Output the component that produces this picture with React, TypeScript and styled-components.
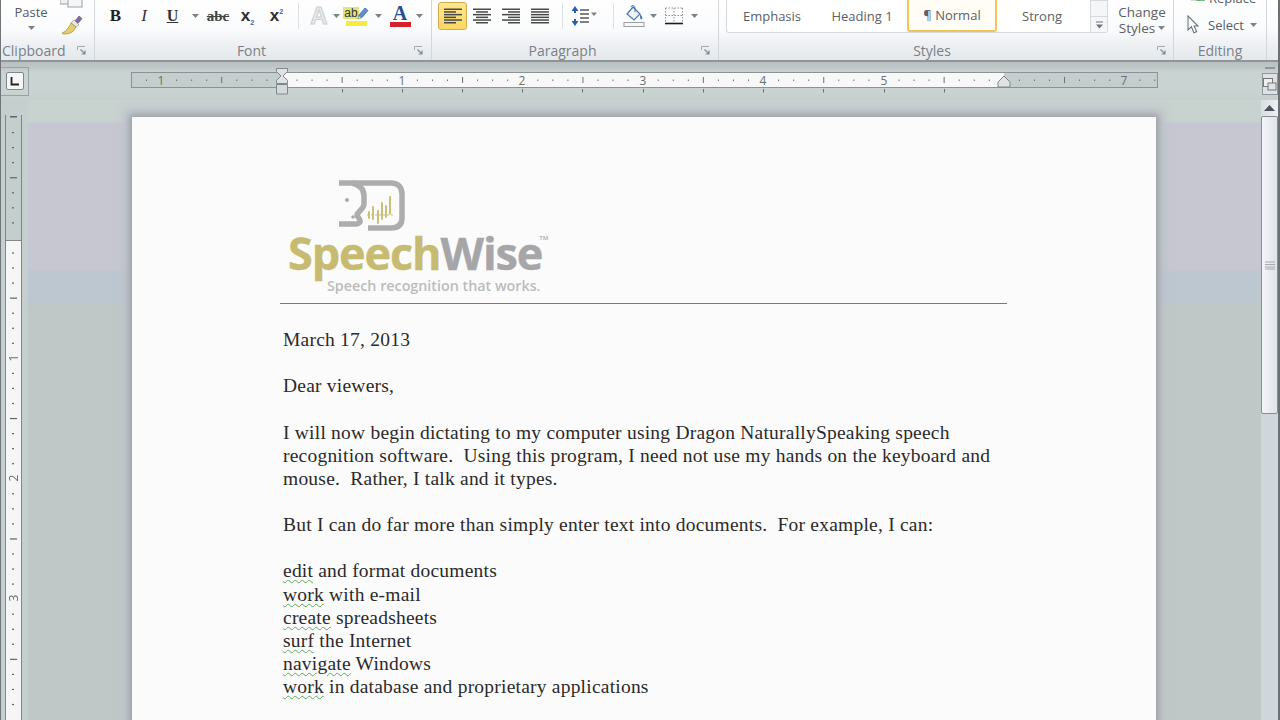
import styled, { createGlobalStyle } from "styled-components";

const GlobalStyle = createGlobalStyle`
  html, body {
    margin: 0;
    padding: 0;
    width: 1280px;
    height: 720px;
    overflow: hidden;
    background: #c4cdcb;
  }
`;

const rulerDots = () => {
  const out: number[] = [];
  for (let x = 11; x < 1020; x += 15.05) out.push(x);
  return out;
};

function Caret() {
  return (
    <CaretBox>
      <svg width="7" height="4" viewBox="0 0 7 4">
        <path d="M0 0h7L3.5 4z" fill="#7c8288" />
      </svg>
    </CaretBox>
  );
}

function Launcher() {
  return (
    <svg width="9" height="9" viewBox="0 0 9 9">
      <path d="M.5 4V.5H8" fill="none" stroke="#a4a9ae" />
      <path d="M3.5 3.5L8 8M8 4.5V8H4.5" fill="none" stroke="#7d8c9c" strokeWidth="1.2" />
    </svg>
  );
}

function AlignIcon({ kind }: { kind: "left" | "center" | "right" | "full" }) {
  const rows = [18, 12, 18, 12, 18, 12];
  return (
    <svg width="18" height="16" viewBox="0 0 18 16">
      {rows.map((w, i) => {
        const width = kind === "full" ? 18 : w;
        const x = kind === "left" || kind === "full" ? 0 : kind === "center" ? (18 - width) / 2 : 18 - width;
        return <rect key={i} x={x} y={i * 2.7 + 0.5} width={width} height="1.5" fill="#4a4a48" />;
      })}
    </svg>
  );
}

function LineSpacingIcon() {
  return (
    <svg width="26" height="20" viewBox="0 0 26 20">
      <path d="M4 0l3.5 5H5v2H3V5H.5z" fill="#2a5fb0" />
      <path d="M4 20l3.5-5H5v-2H3v2H.5z" fill="#2a5fb0" />
      <path d="M9 4h9M9 8h9M9 12h9M9 16h9" stroke="#55585c" strokeWidth="1.5" />
      <path d="M20 6.5h6L23 10z" fill="#7c8288" />
    </svg>
  );
}

function ShadingIcon() {
  return (
    <svg width="22" height="22" viewBox="0 0 22 22">
      <path d="M4 9l6-7 7 7-6 6z" fill="#eef3f8" stroke="#4a78aa" strokeWidth="1.2" />
      <path d="M8 2c0-2 4-2 4 1v4" fill="none" stroke="#4a78aa" />
      <path d="M17 9c2 2 3 4 2 5s-2 0-2-2z" fill="#3f7fc0" />
      <rect x="1" y="17.5" width="20" height="4" fill="#f6f6f4" stroke="#9a9fa3" />
    </svg>
  );
}

function BorderIcon() {
  return (
    <svg width="18" height="18" viewBox="0 0 18 18">
      <path d="M.5 1h17M.5 1v15M17.5 1v15M9 1v15M.5 8.5h17" stroke="#8f9499" strokeDasharray="1.5 1.5" fill="none" />
      <path d="M0 16.5h18" stroke="#1c1c1c" strokeWidth="1.6" />
    </svg>
  );
}

function BrushIcon() {
  return (
    <svg width="22" height="20" viewBox="0 0 22 20">
      <path d="M14 6l4-5 3 2.5-4 5z" fill="#7c6f9c" stroke="#5d5480" strokeWidth=".6" />
      <path d="M13 5l5 5-3 2-5-4z" fill="#e9e9ee" stroke="#8a8a90" strokeWidth=".6" />
      <path d="M10 8l5 4c-2 5-6 7-12 7-1 0-2-.6-2-1 3-1 7-5 9-10z" fill="#e6cf6a" stroke="#9c8a3a" strokeWidth=".7" />
    </svg>
  );
}

function CopyIcon() {
  return (
    <svg width="24" height="8" viewBox="0 0 24 8">
      <rect x="0" y="-6" width="14" height="10" fill="#eef0f3" stroke="#9aa1a8" />
      <rect x="8" y="-6" width="14" height="13" fill="#f6f6f6" stroke="#9aa1a8" />
    </svg>
  );
}

function PenIcon() {
  return (
    <svg width="12" height="14" viewBox="0 0 12 14">
      <path d="M1 12l1-4 6-7 3 2.500-6 7z" fill="#5f8fd0" stroke="#35609a" strokeWidth=".7" />
      <path d="M1 12l1-3 2 2z" fill="#f4ee3a" />
    </svg>
  );
}

function CursorIcon() {
  return (
    <svg width="16" height="20" viewBox="0 0 16 20">
      <path d="M2 1v14l3.400-3.200 2.500 6 2.700-1.100-2.500-5.700H12z" fill="#fff" stroke="#6a7480" strokeWidth="1.100" />
    </svg>
  );
}

function ReplaceIcon() {
  return (
    <svg width="19" height="8" viewBox="0 0 19 8">
      <path d="M1 0v5h4" fill="none" stroke="#6e7378" />
      <rect x="5" y="1" width="5" height="5" fill="#e4e7ea" stroke="#7d8288" strokeWidth=".6" />
      <path d="M11 6c0-4 4-4 4-1v1h-4zM16 3h2v3h-2" fill="none" stroke="#2f9c3a" strokeWidth="1.3" />
    </svg>
  );
}

function Ruler() {
  const numbers: [number, string][] = [
    [30, "1"],
    [271, "1"],
    [391, "2"],
    [512, "3"],
    [632, "4"],
    [753, "5"],
    [993, "7"],
  ];
  const skip = numbers.map(([x]) => x);
  return (
    <svg width="1028" height="30" viewBox="0 0 1028 30">
      <rect x="0.5" y="6.5" width="1026" height="15" fill="#c4cecc" stroke="#8a9296" />
      <rect x="151" y="7" width="722" height="14" fill="#f7f8f7" />
      {rulerDots().map((x, i) => {
        const half = i % 4 === 1;
        if (skip.some((n) => Math.abs(n - x - 4) < 6)) return null;
        return <rect key={i} x={x + 4} y={half ? 11 : 13.5} width="1" height={half ? 6 : 1.5} fill="#6a7074" />;
      })}
      {numbers.map(([x, label]) => (
        <RulerNumber key={x + label} x={x} y="18.5" textAnchor="middle">
          {label}
        </RulerNumber>
      ))}
      {[211, 271, 331, 391, 451, 512, 572, 632, 692, 753, 813].map((x) => (
        <rect key={x} x={x} y="23" width="1" height="3.5" fill="#6a7074" />
      ))}
      <path d="M145.500 2.500h11v3l-4.500 4.500 4.500 4.500v3h-11v-3l4.500-4.500-4.500-4.500z" fill="#dfe3e4" stroke="#80878c" />
      <path d="M145.500 18.500h11v9.500h-11z" fill="#d4d9da" stroke="#80878c" />
      <path d="M867 21v-5l6-6 6 6v5z" fill="#dfe3e4" stroke="#80878c" />
    </svg>
  );
}

function VerticalRuler() {
  const ticks: number[] = [];
  for (let y = 17; y < 620; y += 15.05) ticks.push(y);
  return (
    <svg width="17" height="620" viewBox="0 0 17 620">
      <rect x="0.5" y="0" width="16" height="620" fill="#f5f6f5" stroke="#7f868a" />
      <rect x="1" y="0" width="15" height="125" fill="#c4cecc" />
      <rect x="0.5" y="125" width="16" height="1" fill="#7f868a" />
      <rect x="5" y="1" width="7" height="1.500" fill="#5f6569" />
      {ticks.map((y, i) => {
        if (i % 8 === 7) return null;
        const long = i % 4 === 3;
        return <rect key={i} x={long ? 5 : 7} y={y} width={long ? 7 : 2} height="1.2" fill="#5f6569" />;
      })}
      {[
        [243, "1"],
        [363, "2"],
        [483, "3"],
      ].map(([y, label]) => (
        <RulerNumber key={label} x="0" y="0" textAnchor="middle" transform={`translate(12.500 ${y}) rotate(-90)`}>
          {label}
        </RulerNumber>
      ))}
    </svg>
  );
}

function FaceMark() {
  return (
    <svg width="70" height="56" viewBox="0 0 70 56">
      <g fill="none" stroke="#adadaf" strokeWidth="5.500">
        <path d="M1 5H53C60 5 64 9 64 16V40C64 47 60 50 53 50H30" />
        <path d="M14 5C22 7 26 11 26 18V26C26 31 20 33 19 37C19 39 23 41 22 44C20 47 16 46 12 46H1" />
      </g>
      <circle cx="9" cy="22" r="2" fill="#a9a9ab" />
      <circle cx="15" cy="39" r="1.800" fill="#a9a9ab" />
      <path d="M31 34v6M35 29v12M40 33v12M44 25v16M48 28v11M52 19v17" stroke="#c9c07a" strokeWidth="2" strokeLinecap="round" />
      <path d="M29 37h26" stroke="#c9c07a" strokeWidth="1" strokeDasharray="2 2" />
    </svg>
  );
}

export default function App() {
  return (
    <Window>
      <GlobalStyle />
      <RibbonBar>
        <Group $width={94}>
          <Tools $padding="0 0 0 13px">
            <PasteColumn>
              <ToolLabel>Paste</ToolLabel>
              <Caret />
            </PasteColumn>
            <ClipColumn>
              <CopyIcon />
              <BrushIcon />
            </ClipColumn>
          </Tools>
          <GroupFooter $pad="0 8px 0 1px">
            <GroupName>Clipboard</GroupName>
            <Launcher />
          </GroupFooter>
        </Group>

        <Group $width={337}>
          <Tools $padding="0 0 0 6px">
            <Tool $w={29}>
              <BoldGlyph>B</BoldGlyph>
            </Tool>
            <Tool $w={28}>
              <ItalicGlyph>I</ItalicGlyph>
            </Tool>
            <Tool $w={29}>
              <UnderGlyph>U</UnderGlyph>
            </Tool>
            <Tool $w={16}>
              <Caret />
            </Tool>
            <Tool $w={30}>
              <StrikeGlyph>abc</StrikeGlyph>
            </Tool>
            <Tool $w={29}>
              <ScriptGlyph>
                x<sub>2</sub>
              </ScriptGlyph>
            </Tool>
            <Tool $w={29}>
              <ScriptGlyph>
                x<sup>2</sup>
              </ScriptGlyph>
            </Tool>
            <Sep $l={7} $r={7} />
            <Tool $w={26}>
              <EffectGlyph>A</EffectGlyph>
            </Tool>
            <Tool $w={8}>
              <Caret />
            </Tool>
            <Tool $w={32}>
              <ColorGlyph $bar="#f4ee3a">
                <HighlightRow>
                  <small>ab</small>
                  <PenIcon />
                </HighlightRow>
              </ColorGlyph>
            </Tool>
            <Tool $w={12}>
              <Caret />
            </Tool>
            <Tool $w={32}>
              <ColorGlyph $bar="#d8202a">
                <FontA>A</FontA>
              </ColorGlyph>
            </Tool>
            <Tool $w={7}>
              <Caret />
            </Tool>
          </Tools>
          <GroupFooter $pad="0 8px 0 0">
            <GroupName $center $nudge={6}>
              Font
            </GroupName>
            <Launcher />
          </GroupFooter>
        </Group>

        <Group $width={287}>
          <Tools $padding="0 0 0 6px">
            <AlignButton $active>
              <AlignIcon kind="left" />
            </AlignButton>
            <AlignButton>
              <AlignIcon kind="center" />
            </AlignButton>
            <AlignButton>
              <AlignIcon kind="right" />
            </AlignButton>
            <AlignButton>
              <AlignIcon kind="full" />
            </AlignButton>
            <Sep $l={7} $r={7} />
            <Tool $w={28}>
              <LineSpacingIcon />
            </Tool>
            <Sep $l={15} $r={4} />
            <Tool $w={31}>
              <ShadingIcon />
            </Tool>
            <Tool $w={8}>
              <Caret />
            </Tool>
            <Tool $w={34}>
              <BorderIcon />
            </Tool>
            <Tool $w={7}>
              <Caret />
            </Tool>
          </Tools>
          <GroupFooter $pad="0 8px 0 0">
            <GroupName $center $nudge={8}>
              Paragraph
            </GroupName>
            <Launcher />
          </GroupFooter>
        </Group>

        <Group $width={455}>
          <Tools $padding="0 0 0 7px">
            <Gallery>
              <StyleCell>Emphasis</StyleCell>
              <StyleCell>Heading 1</StyleCell>
              <StyleCell $active>¶ Normal</StyleCell>
              <StyleCell>Strong</StyleCell>
              <GalleryArrows>
                <GalleryArrow />
                <GalleryArrow>
                  <svg width="9" height="8" viewBox="0 0 9 8">
                    <path d="M1 1h7" stroke="#6c7278" />
                    <path d="M1 3.500h7L4.500 7.500z" fill="#6c7278" />
                  </svg>
                </GalleryArrow>
              </GalleryArrows>
            </Gallery>
            <ChangeStyles>
              <div>Change</div>
              <ChangeLine>
                Styles
                <Caret />
              </ChangeLine>
            </ChangeStyles>
          </Tools>
          <GroupFooter $pad="0 7px 0 0">
            <GroupName $center $nudge={12}>
              Styles
            </GroupName>
            <Launcher />
          </GroupFooter>
        </Group>

        <Group $width={93}>
          <EditingTools>
            <EditRow $gap={4}>
              <ReplaceIcon />
              <ToolLabel>Replace</ToolLabel>
            </EditRow>
            <EditRow $gap={6}>
              <CursorIcon />
              <ToolLabel>Select</ToolLabel>
              <Caret />
            </EditRow>
          </EditingTools>
          <GroupFooter $pad="0">
            <GroupName $center>Editing</GroupName>
          </GroupFooter>
        </Group>
      </RibbonBar>

      <RulerRow>
        <TabStopBox>
          <TabStopInner>
            <svg width="9" height="9" viewBox="0 0 9 9">
              <path d="M1.500 0v7.500H9" fill="none" stroke="#222" strokeWidth="1.800" />
            </svg>
          </TabStopInner>
        </TabStopBox>
        <RulerSlot>
          <Ruler />
        </RulerSlot>
        <ViewRuler>
          <svg width="14" height="14" viewBox="0 0 14 14">
            <rect x=".5" y="1.500" width="9" height="8" fill="#eef0f0" stroke="#777" />
            <rect x="5" y="6" width="8" height="7" fill="#dfe4e6" stroke="#777" />
          </svg>
        </ViewRuler>
      </RulerRow>

      <Body>
        <VRulerColumn>
          <VerticalRuler />
        </VRulerColumn>
        <Canvas>
          <Page>
            <LogoBlock>
              <FaceWrap>
                <FaceMark />
              </FaceWrap>
              <Wordmark>
                <Speech>Speech</Speech>
                <Wise>Wise</Wise>
                <Tm>TM</Tm>
              </Wordmark>
              <Tagline>Speech recognition that works.</Tagline>
            </LogoBlock>
            <HeaderRule />
            <Letter>
              <Line>March 17, 2013</Line>
              <Line />
              <Line>Dear viewers,</Line>
              <Line />
              <Line>I will now begin dictating to my computer using Dragon NaturallySpeaking speech</Line>
              <Line>recognition software.&nbsp; Using this program, I need not use my hands on the keyboard and</Line>
              <Line>mouse.&nbsp; Rather, I talk and it types.</Line>
              <Line />
              <Line>But I can do far more than simply enter text into documents.&nbsp; For example, I can:</Line>
              <Line />
              <Line>
                <Spell>edit</Spell> and format documents
              </Line>
              <Line>
                <Spell>work</Spell> with e-mail
              </Line>
              <Line>
                <Spell>create</Spell> spreadsheets
              </Line>
              <Line>
                <Spell>surf</Spell> the Internet
              </Line>
              <Line>
                <Spell>navigate</Spell> Windows
              </Line>
              <Line>
                <Spell>work</Spell> in database and proprietary applications
              </Line>
            </Letter>
          </Page>
        </Canvas>
        <ScrollBar>
          <ScrollButton>
            <svg width="11" height="6" viewBox="0 0 11 6">
              <path d="M5.500 0L11 6H0z" fill="#4c5257" />
            </svg>
          </ScrollButton>
          <ScrollThumb>
            <svg width="10" height="9" viewBox="0 0 10 9">
              <path d="M0 1h10M0 3.500h10M0 6h10M0 8h10" stroke="#a3a8ad" strokeWidth="1" />
            </svg>
          </ScrollThumb>
        </ScrollBar>
      </Body>
    </Window>
  );
}

const Window = styled.div`
  width: 1280px;
  height: 720px;
  overflow: hidden;
  display: flex;
  flex-direction: column;
  box-sizing: border-box;
  border-left: 1px solid #70757a;
  border-right: 2px solid #6b7075;
  font-family: "Open Sans", "Liberation Sans", sans-serif;
  filter: blur(0.35px);
`;

const RibbonBar = styled.div`
  height: 62px;
  flex: none;
  display: flex;
  box-sizing: border-box;
  border-bottom: 2px solid #8f9599;
  background: linear-gradient(to bottom, #ffffff 0, #fafbfc 30px, #eef0f3 44px, #e6e9ec 60px);
`;

const Group = styled.div<{ $width: number }>`
  width: ${(p) => p.$width - 1}px;
  flex: none;
  display: flex;
  flex-direction: column;
  border-right: 1px solid #d3d7db;
`;

const Tools = styled.div<{ $padding: string }>`
  height: 41px;
  display: flex;
  align-items: flex-start;
  padding: ${(p) => p.$padding};
  overflow: hidden;
`;

const GroupFooter = styled.div<{ $pad: string }>`
  flex: 1;
  display: flex;
  align-items: center;
  justify-content: space-between;
  padding: ${(p) => p.$pad};
`;

const GroupName = styled.div<{ $center?: boolean; $nudge?: number }>`
  font-size: 14px;
  color: #7a8087;
  line-height: 16px;
  ${(p) => (p.$center ? "flex: 1; text-align: center;" : "")}
  padding-right: ${(p) => p.$nudge ?? 0}px;
`;

const CaretBox = styled.span`
  display: inline-flex;
  align-items: center;
  justify-content: center;
`;

const PasteColumn = styled.div`
  width: 34px;
  display: flex;
  flex-direction: column;
  align-items: center;
  gap: 5px;
  padding-top: 3px;
`;

const ClipColumn = styled.div`
  margin-left: 12px;
  display: flex;
  flex-direction: column;
  align-items: center;
  gap: 7px;
`;

const ToolLabel = styled.span`
  font-size: 13px;
  line-height: 18px;
  color: #565c63;
`;

const Tool = styled.div<{ $w: number }>`
  width: ${(p) => p.$w}px;
  height: 32px;
  display: flex;
  align-items: center;
  justify-content: center;
  flex: none;
`;

const Sep = styled.div<{ $l: number; $r: number }>`
  width: 1px;
  height: 26px;
  margin: 3px ${(p) => p.$r}px 0 ${(p) => p.$l}px;
  background: #dfe2e5;
  flex: none;
`;

const BoldGlyph = styled.span`
  font: bold 17px "Liberation Serif", serif;
  color: #222;
`;

const ItalicGlyph = styled.span`
  font: italic 17px "Liberation Serif", serif;
  color: #333;
`;

const UnderGlyph = styled.span`
  font: bold 16px "Liberation Serif", serif;
  color: #333;
  text-decoration: underline;
`;

const StrikeGlyph = styled.span`
  font: bold 15px "Liberation Serif", serif;
  color: #444;
  text-decoration: line-through;
`;

const ScriptGlyph = styled.span`
  font: bold 17px "Liberation Sans", sans-serif;
  color: #2c2c2c;
  sub,
  sup {
    font-size: 7px;
    color: #3a63a8;
    line-height: 0;
  }
`;

const EffectGlyph = styled.span`
  font: bold 24px "Liberation Sans", sans-serif;
  color: #e6e8ea;
  -webkit-text-stroke: 1px #cdd0d3;
`;

const ColorGlyph = styled.div<{ $bar: string }>`
  display: flex;
  flex-direction: column;
  align-items: center;
  width: 21px;
  border-bottom: 5px solid ${(p) => p.$bar};
  line-height: 16px;
`;

const HighlightRow = styled.div`
  display: flex;
  align-items: flex-end;
  height: 15px;
  small {
    font: 12px/12px "Liberation Sans", sans-serif;
    color: #333;
    background: #e2e37a;
    padding: 0 1px;
    margin-bottom: 2px;
  }
  svg {
    margin-left: -2px;
  }
`;

const FontA = styled.span`
  font: bold 20px/17px "Liberation Serif", serif;
  color: #1f4e94;
`;

const AlignButton = styled.div<{ $active?: boolean }>`
  width: 29px;
  height: 28px;
  margin: 2px 0.3px 0 0;
  display: flex;
  align-items: center;
  justify-content: center;
  box-sizing: border-box;
  flex: none;
  border-radius: 3px;
  border: 1px solid ${(p) => (p.$active ? "#d9aa4b" : "transparent")};
  background: ${(p) => (p.$active ? "linear-gradient(#fde88f, #fbd763)" : "transparent")};
`;

const Gallery = styled.div`
  width: 382px;
  height: 33px;
  flex: none;
  display: flex;
  box-sizing: border-box;
  background: #ffffff;
  border: 1px solid #d6dade;
  border-top: none;
  border-radius: 0 0 3px 3px;
`;

const StyleCell = styled.div<{ $active?: boolean }>`
  width: 90px;
  height: 32px;
  flex: none;
  box-sizing: border-box;
  display: flex;
  align-items: center;
  justify-content: center;
  font-size: 13px;
  color: #5c6166;
  ${(p) => p.$active && "border: 2px solid #f0c65a; border-top: none; border-radius: 0 0 3px 3px; background: #fffdf6;"}
`;

const GalleryArrows = styled.div`
  margin-left: 3px;
  flex: 1;
  display: flex;
  flex-direction: column;
  border-left: 1px solid #d6dade;
`;

const GalleryArrow = styled.div`
  flex: 1;
  display: flex;
  align-items: center;
  justify-content: center;
  border-top: 1px solid #d6dade;
  background: #f4f6f8;
`;

const ChangeStyles = styled.div`
  margin-left: 4px;
  padding-top: 4px;
  font-size: 13.5px;
  line-height: 16px;
  color: #5a6066;
  text-align: center;
  width: 60px;
`;

const ChangeLine = styled.div`
  display: flex;
  align-items: center;
  justify-content: center;
  gap: 3px;
`;

const EditingTools = styled.div`
  height: 41px;
  box-sizing: border-box;
  overflow: hidden;
  display: flex;
  flex-direction: column;
  justify-content: flex-end;
  gap: 9px;
  padding: 0 0 7px 12px;
`;

const EditRow = styled.div<{ $gap: number }>`
  height: 18px;
  flex: none;
  display: flex;
  align-items: center;
  gap: ${(p) => p.$gap}px;
`;

const RulerRow = styled.div`
  height: 38px;
  flex: none;
  display: flex;
  align-items: center;
  background: linear-gradient(to bottom, #b9c0c2 0, #bfc6c8 5px, #c9d3d1 10px, #c9d3d1 30px, #c6cfcd 38px);
`;

const TabStopBox = styled.div`
  width: 28px;
  height: 29px;
  flex: none;
  box-sizing: border-box;
  border: 1px solid #9aa2a6;
  border-left: none;
  display: flex;
  align-items: center;
  justify-content: center;
`;

const TabStopInner = styled.div`
  width: 18px;
  height: 18px;
  box-sizing: border-box;
  border: 1px solid #80878c;
  background: #f5f6f6;
  border-radius: 2px;
  display: flex;
  align-items: center;
  justify-content: center;
`;

const RulerSlot = styled.div`
  margin-left: 102px;
  flex: none;
  display: flex;
`;

const RulerNumber = styled.text`
  font: 12px "Open Sans", "Liberation Sans", sans-serif;
  fill: #6a6f72;
`;

const ViewRuler = styled.div`
  margin-left: 103px;
  width: 16px;
  height: 22px;
  margin-top: 6px;
  flex: none;
  box-sizing: border-box;
  border: 1px solid #8f979b;
  display: flex;
  align-items: center;
  justify-content: center;
  background: #dde3e4;
  position: relative;

  &::before {
    content: "";
    position: absolute;
    top: -7px;
    left: 2px;
    right: 2px;
    height: 2px;
    background: #8f979b;
  }
`;

const Body = styled.div`
  flex: 1;
  display: flex;
  min-height: 0;
`;

const VRulerColumn = styled.div`
  width: 27px;
  flex: none;
  box-sizing: border-box;
  padding: 15px 0 0 4px;
  background: #c5cfcd;
  overflow: hidden;
`;

const Canvas = styled.div`
  flex: 1;
  min-width: 0;
  padding: 17px 0 0 104px;
  overflow: hidden;
  background: linear-gradient(
    to bottom,
    #c8d2cf 0,
    #c8d2cf 21px,
    #c6c7d1 24px,
    #c6c7d1 169px,
    #bcc7d0 172px,
    #bcc7d0 202px,
    #bfc8c6 205px
  );
`;

const Page = styled.div`
  width: 874px;
  height: 700px;
  box-sizing: content-box;
  padding: 0 0 0 150px;
  background: #fbfbfb;
  box-shadow:
    0 0 7px 2px #969ca1,
    0 0 9px 9px #c0c4cb;
`;

const LogoBlock = styled.div`
  width: 270px;
  height: 186px;
  box-sizing: border-box;
  padding: 61px 0 0 7px;
  margin-left: -4px;
  display: flex;
  flex-direction: column;
`;

const FaceWrap = styled.div`
  margin-left: 53px;
  height: 56px;
`;

const Wordmark = styled.div`
  font: bold 45px/42px "Open Sans", "Liberation Sans", sans-serif;
  letter-spacing: -1.1px;
  -webkit-text-stroke: 0.4px currentColor;
  display: flex;
  align-items: flex-start;
  margin-top: -2px;
  margin-left: 3px;
`;

const Speech = styled.span`
  color: #c6bb70;
`;

const Wise = styled.span`
  color: #a6a6a8;
`;

const Tm = styled.span`
  font-size: 6px;
  line-height: 12px;
  letter-spacing: 0;
  color: #b8b8b8;
  margin-left: -3px;
  -webkit-text-stroke: 0;
`;

const Tagline = styled.div`
  margin: 4px 0 0 42px;
  font-size: 14.3px;
  line-height: 16px;
  font-weight: 600;
  color: #bcbcbc;
  white-space: nowrap;
`;

const HeaderRule = styled.div`
  width: 727px;
  height: 1px;
  margin-left: -2px;
  background: #77797b;
`;

const Letter = styled.div`
  margin: 24px 0 0 1px;
  font-family: "Liberation Serif", "Times New Roman", serif;
  font-size: 19.5px;
  letter-spacing: 0.22px;
  line-height: 23.15px;
  color: #2a2a2a;
`;

const Line = styled.div`
  height: 23.15px;
  white-space: nowrap;
`;

const Spell = styled.span`
  text-decoration: underline wavy #5fa85f 1px;
  text-underline-offset: 2px;
`;

const ScrollBar = styled.div`
  width: 17px;
  flex: none;
  display: flex;
  flex-direction: column;
  background: #cfd6dc;
`;

const ScrollButton = styled.div`
  height: 16px;
  flex: none;
  display: flex;
  align-items: center;
  justify-content: center;
  background: linear-gradient(to right, #d9dee3, #eceff2);
`;

const ScrollThumb = styled.div`
  height: 298px;
  flex: none;
  box-sizing: border-box;
  border: 1px solid #888e94;
  border-radius: 2px;
  background: linear-gradient(to right, #f4f5f8, #dfe3ea);
  display: flex;
  align-items: center;
  justify-content: center;
`;
